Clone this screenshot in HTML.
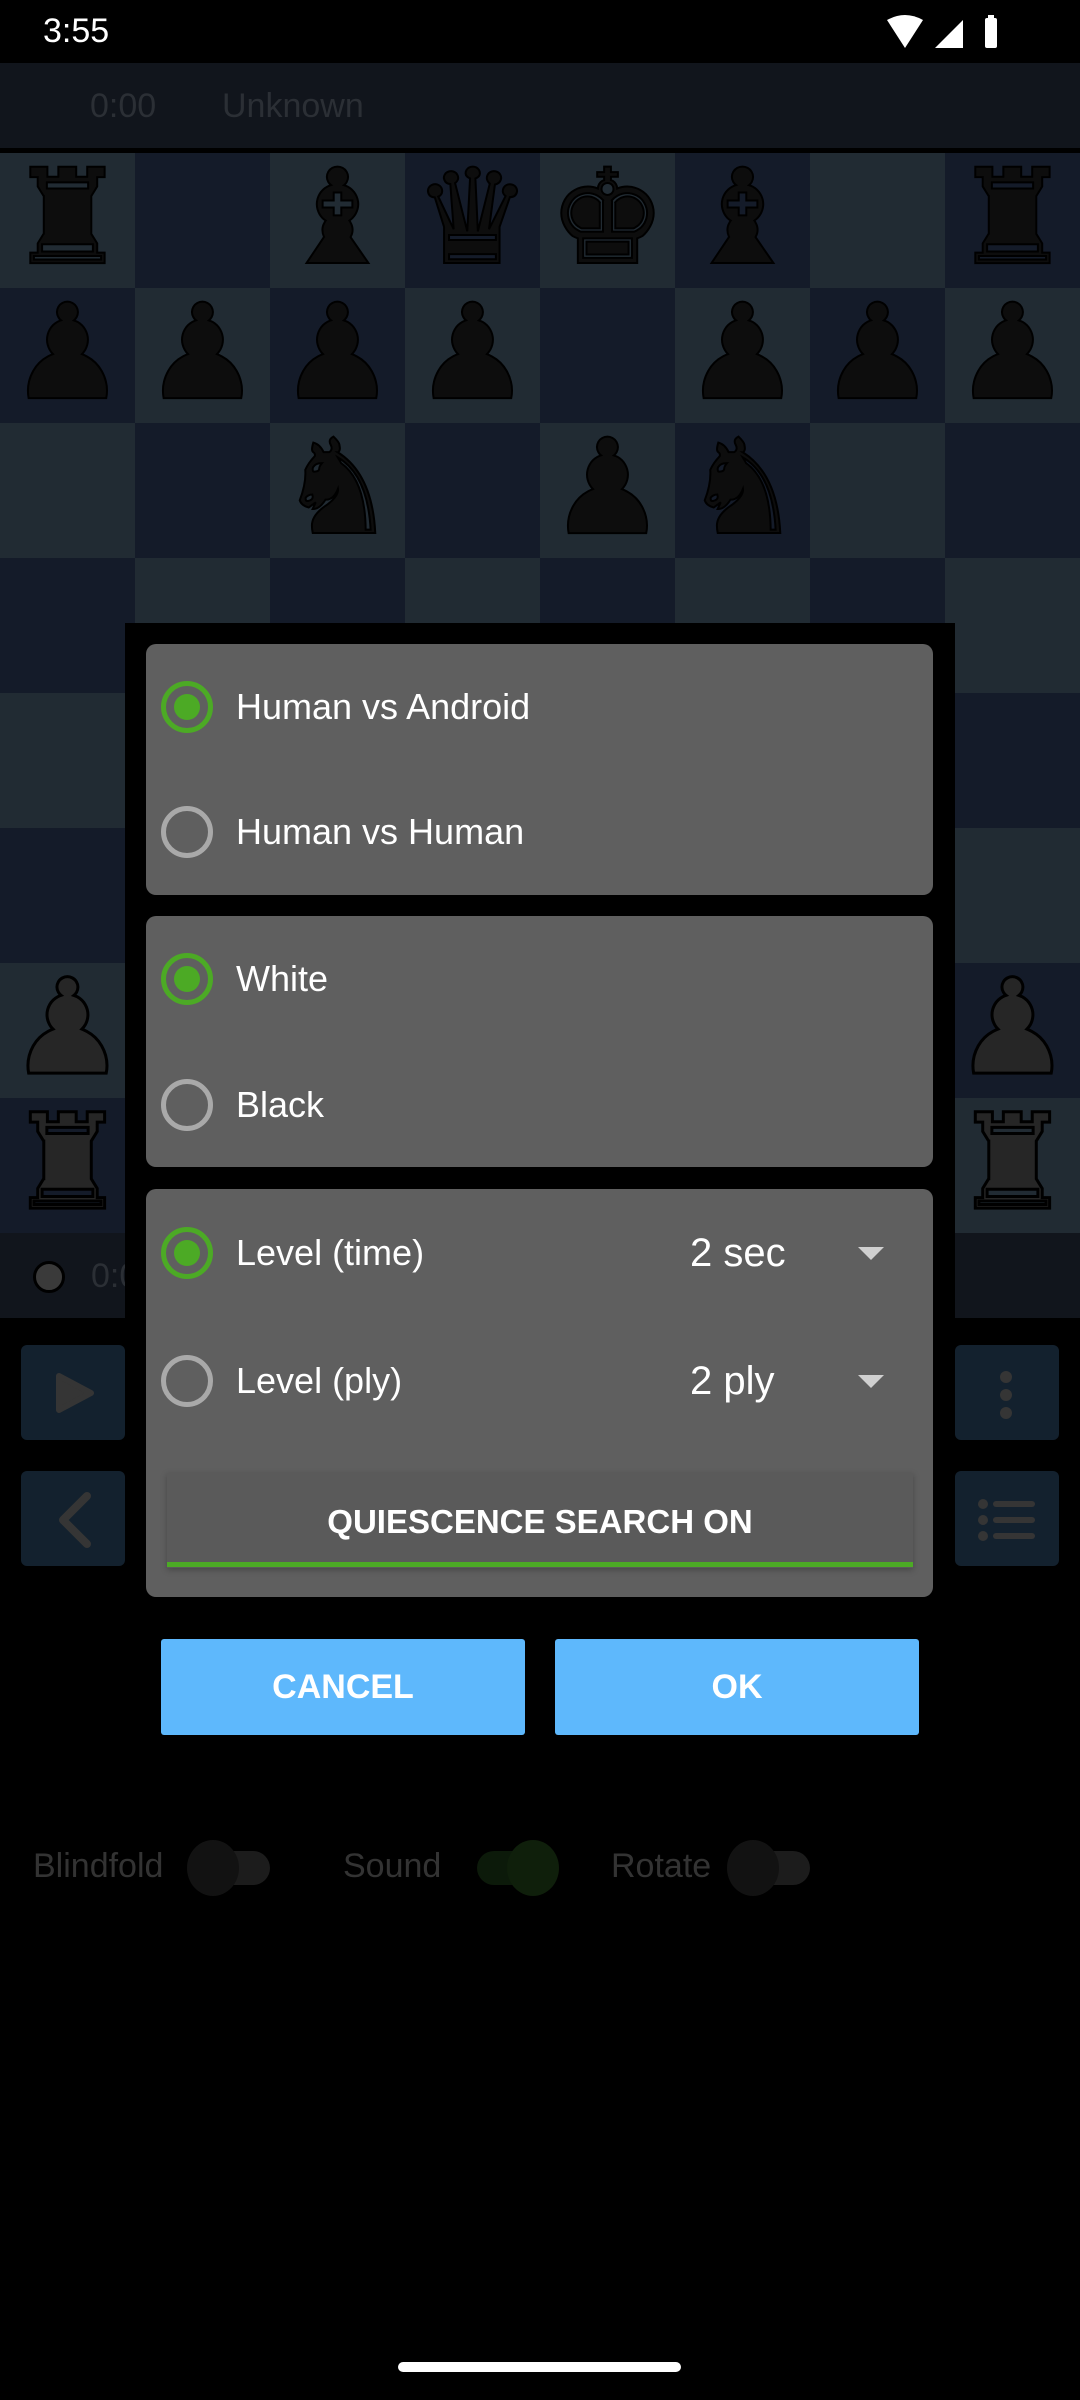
<!DOCTYPE html>
<html><head><meta charset="utf-8"><style>
*{margin:0;padding:0;box-sizing:border-box}
body{width:1080px;height:2400px;background:#000;position:relative;overflow:hidden;font-family:"Liberation Sans",sans-serif}
.abs{position:absolute}
.sq{position:absolute;width:135px;height:135px;display:flex;align-items:center;justify-content:center;font-family:"DejaVu Sans",sans-serif;font-size:132px;line-height:1;padding-bottom:6px}
.bp{color:#0d0d0d;-webkit-text-stroke:2px #000}
.wp{color:#262626;-webkit-text-stroke:3px #000}
.grp{position:absolute;left:146px;width:787px;background:#5f5f5f;border-radius:10px}
.radio{position:absolute;left:161px;width:52px;height:52px;border-radius:50%;border:5px solid #a9a9a9}
.radio.on{border-color:#4caa25}
.radio.on::after{content:"";position:absolute;left:8px;top:8px;width:26px;height:26px;border-radius:50%;background:#4caa25}
.lbl{position:absolute;left:236px;color:#fff;font-size:36px;line-height:40px}
.val{position:absolute;left:690px;color:#fff;font-size:40px;line-height:44px}
.tri{position:absolute;left:858px;width:0;height:0;border-left:13px solid transparent;border-right:13px solid transparent;border-top:13px solid #d0d0d0}
.btn{position:absolute;background:#13212e;border-radius:6px}
.tg{position:absolute;color:#333;font-size:34px;line-height:40px;top:1846px}
.track{position:absolute;top:1851px;width:80px;height:34px;border-radius:17px;background:#1c1c1c}
.thumb{position:absolute;top:1840px;width:52px;height:56px;border-radius:50%;background:#121212}
</style></head><body>
<div class="abs" style="left:43px;top:10px;color:#fff;font-size:34px;line-height:42px">3:55</div>
<svg class="abs" style="left:885px;top:14px" width="120" height="36" viewBox="0 0 120 36">
<path d="M2 6 Q20 -4 38 6 L20 34 Z" fill="#fff"/>
<path d="M50 34 L78 34 L78 6 Z" fill="#fff"/>
<rect x="100" y="4" width="12" height="30" rx="2" fill="#fff"/><rect x="103" y="1" width="6" height="4" fill="#fff"/>
</svg>
<div class="abs" style="left:0;top:63px;width:1080px;height:85px;background:#11151c"></div>
<div class="abs" style="left:90px;top:86px;color:#2b2f35;font-size:34px;line-height:40px">0:00</div>
<div class="abs" style="left:222px;top:86px;color:#2b2f35;font-size:34px;line-height:40px">Unknown</div>
<div id="board" class="abs" style="left:0;top:153px;width:1080px;height:1080px"></div>
<script>
var b=document.getElementById('board');
var rows=["rxbqkbxr","ppppxppp","xxnxpnxx","xxxxxxxx","xxxxxxxx","xxxxxxxx","PPPPPPPP","RNBQKBNR"];
var g={r:"\u265C",n:"\u265E",b:"\u265D",q:"\u265B",k:"\u265A",p:"\u265F"};
for(var r=0;r<8;r++)for(var c=0;c<8;c++){
var d=document.createElement('div');d.className='sq';
d.style.left=(c*135)+'px';d.style.top=(r*135)+'px';
d.style.background=((r+c)%2==0)?'#212b33':'#141b29';
var ch=rows[r][c];
if(ch!='x'){var lo=ch.toLowerCase();d.textContent=g[lo];d.className+=(ch==lo)?' bp':' wp';}
b.appendChild(d);}
</script>
<div class="abs" style="left:0;top:1233px;width:1080px;height:85px;background:#11151c"></div>
<div class="abs" style="left:33px;top:1261px;width:32px;height:32px;border-radius:50%;background:#3a3a3a;border:3px solid #000"></div>
<div class="abs" style="left:91px;top:1256px;color:#2b2f35;font-size:34px;line-height:40px">0:00</div>
<div class="btn" style="left:21px;top:1345px;width:104px;height:95px"></div>
<svg class="abs" style="left:55px;top:1372px" width="40" height="42"><path d="M4 4 L36 21 L4 38 Z" fill="#353535" stroke="#353535" stroke-width="6" stroke-linejoin="round"/></svg>
<div class="btn" style="left:21px;top:1471px;width:104px;height:95px"></div>
<svg class="abs" style="left:55px;top:1490px" width="40" height="60"><path d="M32 6 L8 30 L32 54" fill="none" stroke="#353535" stroke-width="8" stroke-linecap="round" stroke-linejoin="round"/></svg>
<div class="btn" style="left:955px;top:1345px;width:104px;height:95px"></div>
<svg class="abs" style="left:994px;top:1370px" width="24" height="50"><circle cx="12" cy="7" r="6" fill="#353535"/><circle cx="12" cy="25" r="6" fill="#353535"/><circle cx="12" cy="43" r="6" fill="#353535"/></svg>
<div class="btn" style="left:955px;top:1471px;width:104px;height:95px"></div>
<svg class="abs" style="left:975px;top:1495px" width="70" height="50"><g fill="#353535"><circle cx="8" cy="9" r="5"/><circle cx="8" cy="25" r="5"/><circle cx="8" cy="41" r="5"/><rect x="18" y="6" width="42" height="6" rx="3"/><rect x="18" y="22" width="42" height="6" rx="3"/><rect x="18" y="38" width="42" height="6" rx="3"/></g></svg>
<div class="tg" style="left:33px">Blindfold</div>
<div class="track" style="left:190px"></div><div class="thumb" style="left:187px"></div>
<div class="tg" style="left:343px">Sound</div>
<div class="track" style="left:477px;background:#0c1a0a"></div><div class="thumb" style="left:507px;background:#0f1f0b"></div>
<div class="tg" style="left:611px">Rotate</div>
<div class="track" style="left:730px"></div><div class="thumb" style="left:727px"></div>
<div class="abs" style="left:125px;top:623px;width:830px;height:1000px;background:#000"></div>
<div class="grp" style="top:644px;height:251px"></div>
<div class="radio on" style="top:681px"></div><div class="lbl" style="top:687px">Human vs Android</div>
<div class="radio" style="top:806px"></div><div class="lbl" style="top:812px">Human vs Human</div>
<div class="grp" style="top:916px;height:251px"></div>
<div class="radio on" style="top:953px"></div><div class="lbl" style="top:959px">White</div>
<div class="radio" style="top:1079px"></div><div class="lbl" style="top:1085px">Black</div>
<div class="grp" style="top:1189px;height:408px"></div>
<div class="radio on" style="top:1227px"></div><div class="lbl" style="top:1233px">Level (time)</div>
<div class="val" style="top:1231px">2 sec</div><div class="tri" style="top:1247px"></div>
<div class="radio" style="top:1355px"></div><div class="lbl" style="top:1361px">Level (ply)</div>
<div class="val" style="top:1359px">2 ply</div><div class="tri" style="top:1375px"></div>
<div class="abs" style="left:167px;top:1473px;width:746px;height:95px;background:#5a5a5a;box-shadow:0 2px 6px rgba(0,0,0,.25)"></div>
<div class="abs" style="left:167px;top:1562px;width:746px;height:5px;background:#4caa25"></div>
<div class="abs" style="left:167px;top:1502px;width:746px;text-align:center;color:#fff;font-size:33px;font-weight:bold;line-height:40px">QUIESCENCE SEARCH ON</div>
<div class="abs" style="left:161px;top:1639px;width:364px;height:96px;background:#5eb8fc;border-radius:3px;color:#fff;font-size:34px;font-weight:bold;line-height:96px;text-align:center">CANCEL</div>
<div class="abs" style="left:555px;top:1639px;width:364px;height:96px;background:#5eb8fc;border-radius:3px;color:#fff;font-size:34px;font-weight:bold;line-height:96px;text-align:center">OK</div>
<div class="abs" style="left:398px;top:2362px;width:283px;height:10px;border-radius:5px;background:#fff"></div>
</body></html>
